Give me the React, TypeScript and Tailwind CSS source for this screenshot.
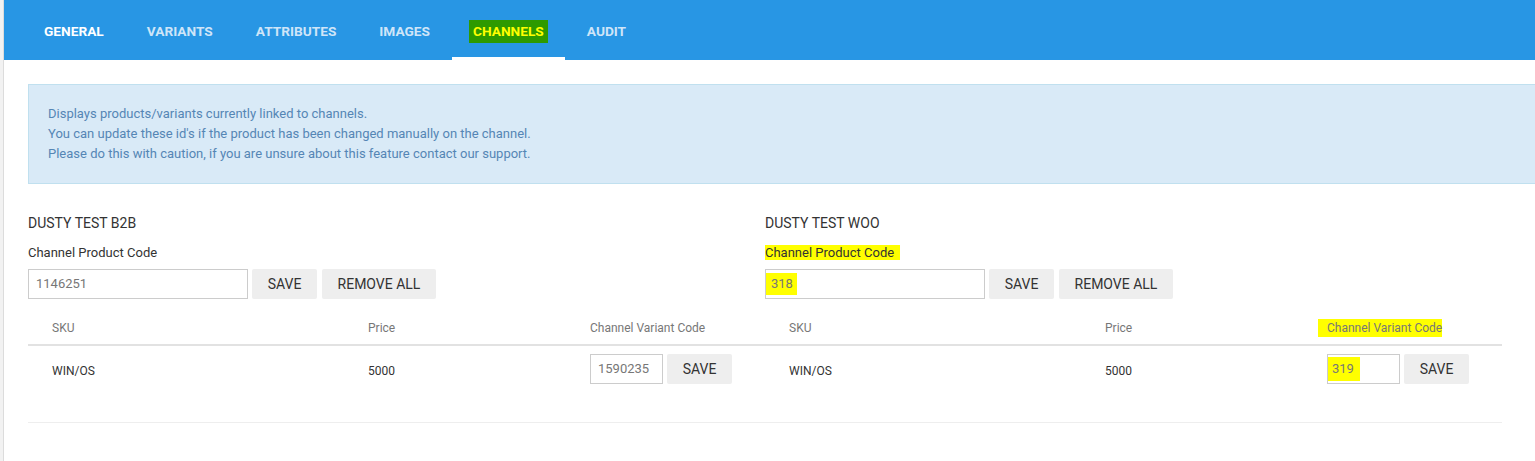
import React from 'react';

const tabs = ['GENERAL', 'VARIANTS', 'ATTRIBUTES', 'IMAGES', 'CHANNELS', 'AUDIT'];

const Hl: React.FC<{ children: React.ReactNode; className?: string }> = ({ children, className = '' }) => (
  <span className={`bg-[#ffff00] ${className}`}>{children}</span>
);

const Btn: React.FC<{ label: string; w: string }> = ({ label, w }) => (
  <div className={`${w} h-[30px] bg-[#eeeeee] rounded-[2px] flex items-center justify-center text-[14px] text-[#333]`}>
    {label}
  </div>
);

type ChannelProps = {
  title: string;
  productCode: React.ReactNode;
  variantCode: React.ReactNode;
  codeLabel: React.ReactNode;
  variantLabel: React.ReactNode;
};

const Channel: React.FC<ChannelProps> = ({ title, productCode, variantCode, codeLabel, variantLabel }) => (
  <div className="w-[737px] shrink-0">
    <div className="text-[14px] leading-[16px] text-[#333] uppercase">{title}</div>
    <div className="mt-[14px] text-[13px] leading-[16px] text-[#333]">{codeLabel}</div>
    <div className="mt-[8px] flex gap-[4px]">
      <div className="w-[220px] h-[30px] border border-[#cccccc] flex items-center text-[13px] text-[#777]">
        {productCode}
      </div>
      <Btn label="SAVE" w="w-[65px]" />
      <div className="ml-[1px]">
        <Btn label="REMOVE ALL" w="w-[114px]" />
      </div>
    </div>

    {/* variants table */}
    <div>
      <div className="h-[47px] pt-[21px] flex items-start text-[12px] leading-[16px] text-[#777] border-b-2 border-[#e2e2e2]">
        <div className="w-[340px] pl-[24px]">SKU</div>
        <div className="w-[222px]">Price</div>
        <div>{variantLabel}</div>
      </div>
      <div className="h-[77px] border-b border-[#eeeeee] flex items-start pt-[8px] text-[12px] text-[#333]">
        <div className="w-[340px] pl-[24px] h-[30px] flex items-center mt-[2px]">WIN/OS</div>
        <div className="w-[222px] h-[30px] flex items-center mt-[2px]">5000</div>
        <div className="flex gap-[4px]">
          <div className="w-[73px] h-[30px] border border-[#cccccc] flex items-center text-[13px] text-[#777]">
            {variantCode}
          </div>
          <Btn label="SAVE" w="w-[65px]" />
        </div>
      </div>
    </div>
  </div>
);

const App: React.FC = () => {
  return (
    <div
      className="w-[1535px] h-[461px] overflow-hidden bg-white flex"
      style={{ fontFamily: 'Roboto, "Noto Sans", sans-serif' }}
    >
      {/* left gutter */}
      <div className="w-[4px] shrink-0 bg-[#f2f2f2] border-r border-[#dcdcdc]" />

      <div className="flex-1 min-w-0 flex flex-col">
        {/* Tabs header */}
        <div className="h-[60px] bg-[#2896e4] flex items-stretch pl-[18.5px] shrink-0">
          {tabs.map((t) => {
            const active = t === 'CHANNELS';
            return (
              <div
                key={t}
                className={`relative px-[21.5px] pt-[3px] flex items-center text-[13.7px] font-bold ${
                  t === 'GENERAL' ? 'text-white' : 'text-[#cfe5f8]'
                }`}
              >
                {active ? (
                  <span className="bg-[#2e9a00] text-[#ffff00] px-[4px] -mx-[4px] py-[1px]">{t}</span>
                ) : (
                  t
                )}
                {active && <div className="absolute left-0 right-0 bottom-0 h-[3px] bg-white" />}
              </div>
            );
          })}
        </div>

        <div className="pl-[24px]">
          {/* Info box */}
          <div className="mt-[24px] w-[1540px] border border-[#c0e0ef] bg-[#d9eaf7] px-[19px] pt-[19px] pb-[19px] text-[13px] leading-[20px] text-[#5586b5]">
            <div>Displays products/variants currently linked to channels.</div>
            <div>You can update these id's if the product has been changed manually on the channel.</div>
            <div>Please do this with caution, if you are unsure about this feature contact our support.</div>
          </div>

          <div className="flex mt-[31px]">
            <Channel
              title="Dusty Test B2B"
              codeLabel="Channel Product Code"
              productCode={<span className="pl-[7px]">1146251</span>}
              variantLabel="Channel Variant Code"
              variantCode={<span className="pl-[7px]">1590235</span>}
            />
            <Channel
              title="Dusty Test Woo"
              codeLabel={<Hl className="pr-[6px]">Channel Product Code</Hl>}
              productCode={<Hl className="pl-[5px] pr-[4px] py-[1px]">318</Hl>}
              variantLabel={<Hl className="-ml-[9px] pl-[9px] py-[2px]">Channel Variant Code</Hl>}
              variantCode={<Hl className="pl-[4px] pr-[6px] py-[2px]">319</Hl>}
            />
          </div>
        </div>
      </div>
    </div>
  );
};

export default App;
